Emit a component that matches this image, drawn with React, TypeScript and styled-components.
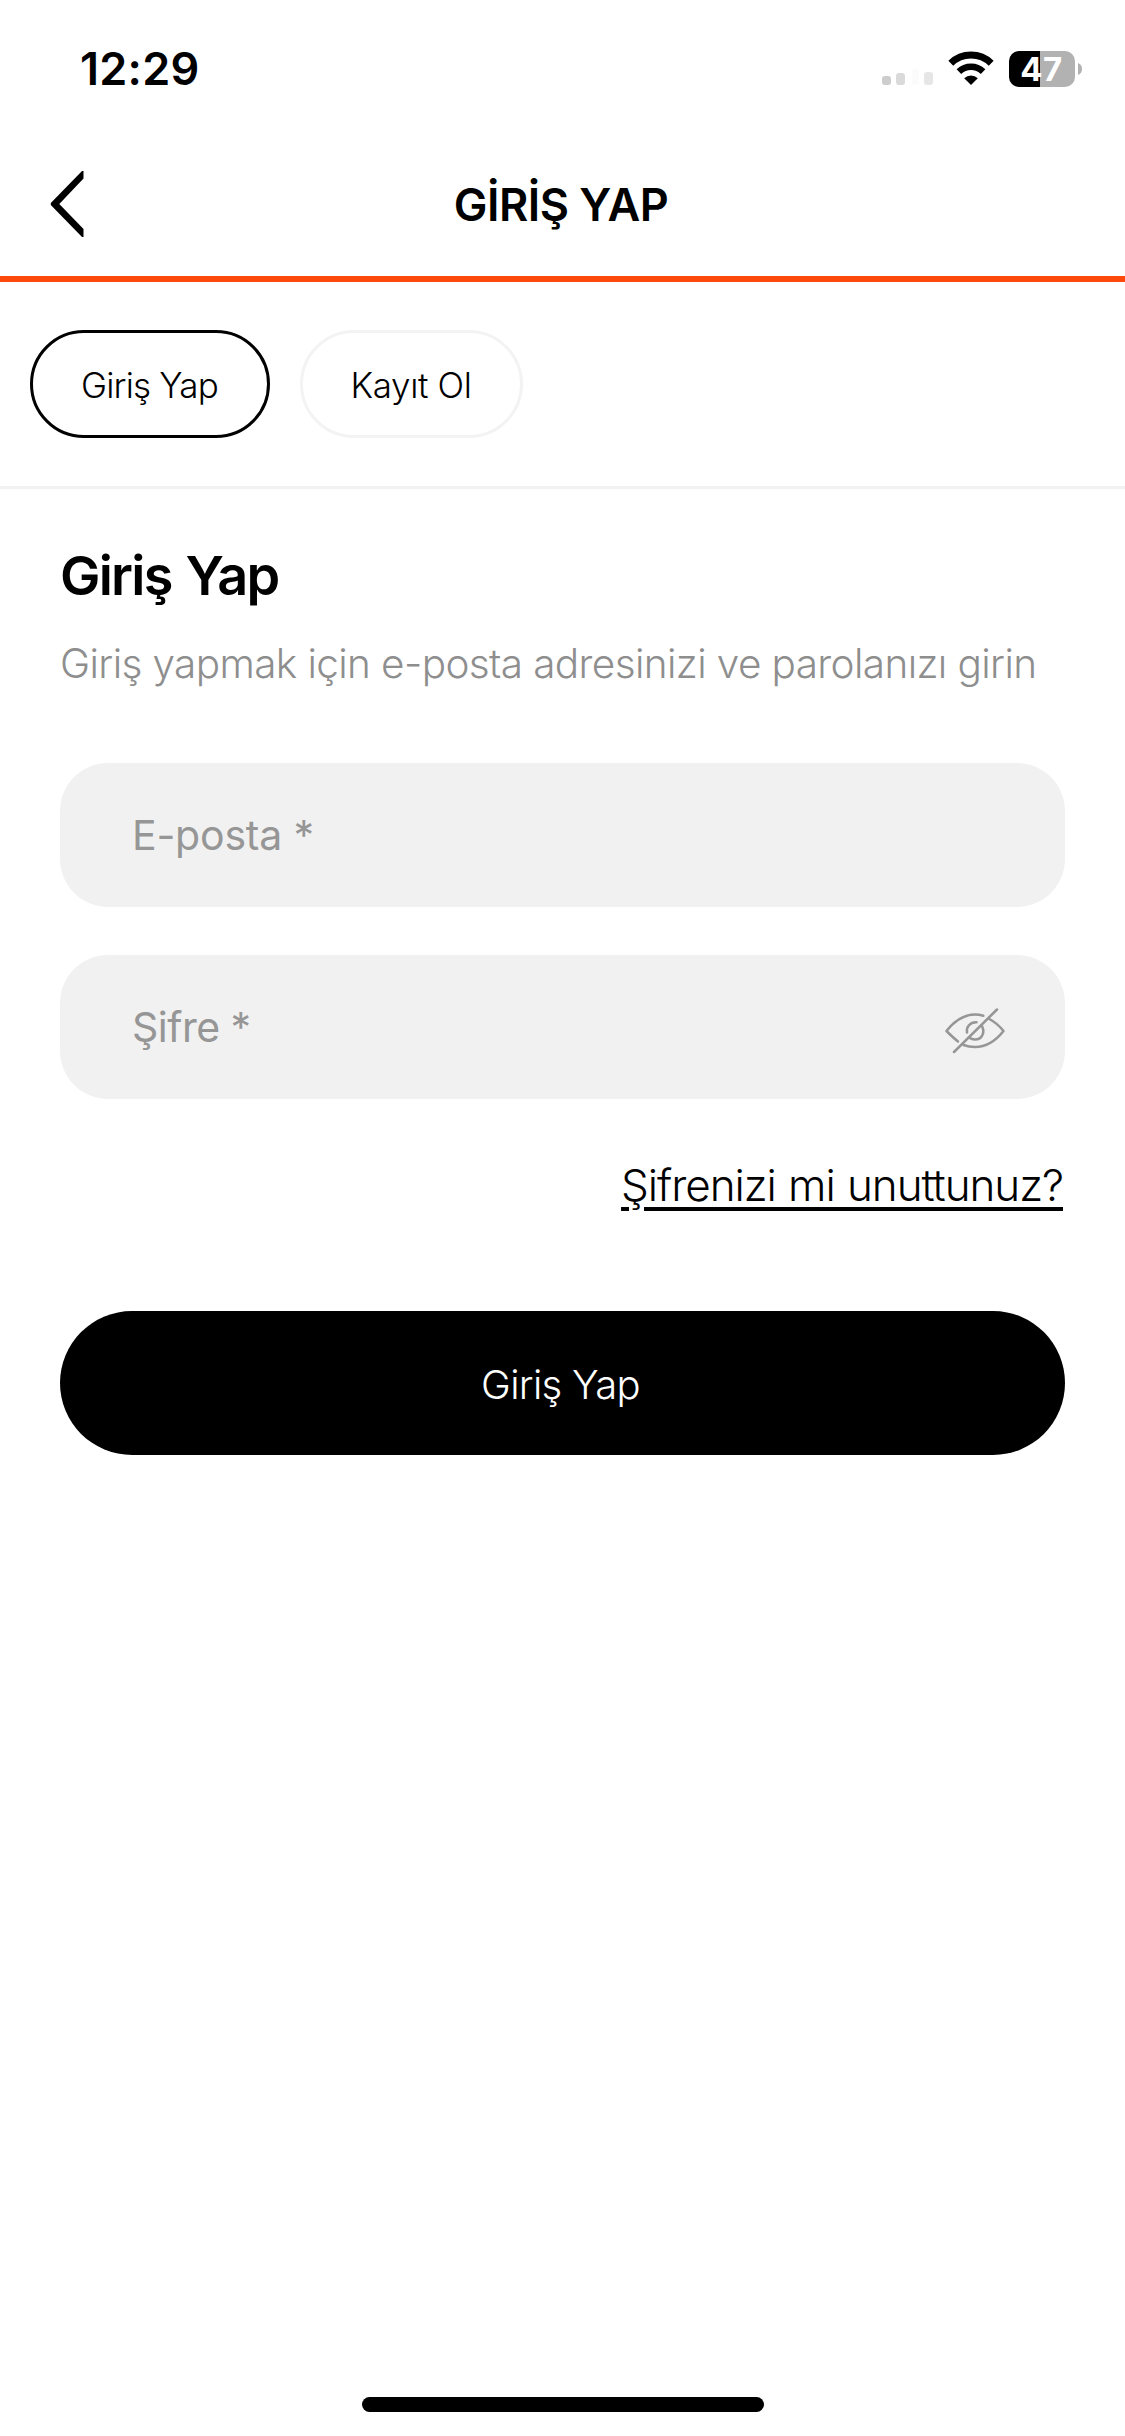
import React from "react";
import styled, { createGlobalStyle } from "styled-components";

const GlobalStyle = createGlobalStyle`
  *, *::before, *::after { box-sizing: border-box; }
  body { margin: 0; background: #fff; color: #000; font-family: Inter, "Noto Sans", sans-serif; }
  button { font-family: inherit; color: inherit; margin: 0; padding: 0; border: 0; background: none; }
`;

const Screen = styled.div`
  width: 1125px;
  height: 2436px;
  display: flex;
  flex-direction: column;
  background: #fff;
  overflow: hidden;
`;

const StatusBar = styled.div`
  height: 132px;
  padding: 6px 43px 0 80px;
  display: flex;
  align-items: center;
  justify-content: space-between;
`;

const Clock = styled.span`
  font-size: 45px;
  font-weight: 600;
  line-height: 54px;
  letter-spacing: 0.26px;
`;

const StatusIcons = styled.div`
  display: flex;
  align-items: center;
`;

const Signal = styled.svg`
  width: 52px;
  height: 36px;
  margin-right: 14px;
`;

const Wifi = styled.svg`
  width: 46px;
  height: 36px;
  margin-right: 15px;
`;

const Battery = styled.div`
  width: 66px;
  height: 36px;
  border-radius: 10px;
  background: linear-gradient(to right, #000 31px, #b2b2b2 31px);
  display: flex;
  align-items: center;
  justify-content: center;
  color: #fff;
  font-size: 33px;
  font-weight: 700;
  line-height: 36px;
  letter-spacing: 0.6px;
  padding-right: 1px;
`;

const BatteryCap = styled.svg`
  width: 4px;
  height: 12px;
  margin-left: 3px;
`;

const Header = styled.header`
  height: 150px;
  border-bottom: 6px solid #fb4a0c;
  padding: 0 50px;
  display: grid;
  grid-template-columns: 100px 1fr 100px;
  align-items: center;
`;

const BackButton = styled.button`
  height: 68px;
  display: flex;
`;

const Title = styled.h1`
  margin: 0;
  text-align: center;
  font-size: 45px;
  font-weight: 600;
  line-height: 56px;
  letter-spacing: -0.5px;
  padding: 1px 3px 0 0;
`;

const Tabs = styled.nav`
  display: flex;
  gap: 30px;
  padding: 48px 30px;
  border-bottom: 3px solid #f1f1f1;
`;

const Tab = styled.button<{ $active?: boolean; $width: number; $tracking: number }>`
  && {
    width: ${(p) => p.$width}px;
    height: 108px;
    border: 3px solid ${(p) => (p.$active ? "#000" : "#f3f3f3")};
    border-radius: 54px;
    padding: 2px 1px 0 0;
    font-size: 35px;
    font-weight: 300;
    letter-spacing: ${(p) => p.$tracking}px;
  }
`;

const Content = styled.main`
  flex: 1;
  padding: 51px 60px 0;
  display: flex;
  flex-direction: column;
`;

const Heading = styled.h2`
  margin: 0;
  font-size: 54px;
  font-weight: 600;
  line-height: 72px;
  letter-spacing: -1.75px;
  word-spacing: 2px;
`;

const Subtitle = styled.p`
  margin: 24px 0 0;
  font-size: 40.5px;
  font-weight: 300;
  line-height: 56px;
  letter-spacing: -0.62px;
  white-space: nowrap;
  color: #8e8e8e;
`;

const Fields = styled.div`
  margin-top: 71px;
  display: flex;
  flex-direction: column;
  gap: 48px;
`;

const Field = styled.label`
  height: 144px;
  border-radius: 48px;
  background: #f1f1f1;
  padding: 0 60px 0 72px;
  display: flex;
  align-items: center;
  justify-content: space-between;
`;

const FieldLabel = styled.span<{ $tracking: number }>`
  font-size: 41px;
  font-weight: 400;
  line-height: 50px;
  letter-spacing: ${(p) => p.$tracking}px;
  color: #969696;
`;

const EyeIcon = styled.svg`
  width: 60px;
  height: 46px;
  margin-top: 7px;
`;

const ForgotLink = styled.a`
  align-self: flex-end;
  margin: 56px 2px 0 0;
  font-size: 44px;
  font-weight: 300;
  line-height: 60px;
  letter-spacing: -1.05px;
  word-spacing: 1px;
  text-decoration: underline;
  text-decoration-thickness: 4px;
  text-underline-offset: 6px;
`;

const SubmitButton = styled.button`
  && {
    margin-top: 96px;
    height: 144px;
    border-radius: 72px;
    background: #000;
    color: #fff;
    padding: 2px 4px 0 0;
    font-size: 40px;
    font-weight: 300;
    letter-spacing: -0.68px;
  }
`;

const HomeIndicator = styled.div`
  align-self: center;
  width: 402px;
  height: 15px;
  margin-bottom: 24px;
  border-radius: 8px;
  background: #000;
`;

export default function App() {
  return (
    <Screen>
      <GlobalStyle />
      <StatusBar>
        <Clock>12:29</Clock>
        <StatusIcons>
          <Signal viewBox="0 0 52 36">
            <rect x="0" y="25" width="9" height="9" rx="3" fill="#cdcdcd" />
            <rect x="14" y="22" width="9" height="12" rx="3" fill="#dadada" />
            <rect x="30" y="18" width="7" height="16" rx="3" fill="#fbfbfb" />
            <rect x="42" y="21" width="9" height="13" rx="3" fill="#e6e6e6" />
          </Signal>
          <Wifi viewBox="0 0 46 36" fill="none">
            <path d="M2.8 12.2 A29 29 0 0 1 43.2 12.2" stroke="#000" strokeWidth="7" />
            <path d="M10.9 20.6 A17.6 17.6 0 0 1 35.1 20.6" stroke="#000" strokeWidth="6.6" />
            <path d="M16.2 27.2 A10 10 0 0 1 29.8 27.2 L23 34 Z" fill="#000" />
          </Wifi>
          <Battery>47</Battery>
          <BatteryCap viewBox="0 0 4 12">
            <path d="M0 0 A6.5 6.5 0 0 1 0 12 Z" fill="#b2b2b2" />
          </BatteryCap>
        </StatusIcons>
      </StatusBar>

      <Header>
        <BackButton aria-label="Geri">
          <svg width="34" height="68" viewBox="0 0 34 68">
            <path d="M33.5 1 V8.6 L9.3 34 L33.5 59 V67 H32 L0.8 35 V33 L32 1 Z" fill="#000" />
          </svg>
        </BackButton>
        <Title>GİRİŞ YAP</Title>
      </Header>

      <Tabs>
        <Tab $active $width={240} $tracking={-0.8}>Giriş Yap</Tab>
        <Tab $width={223} $tracking={-0.35}>Kayıt Ol</Tab>
      </Tabs>

      <Content>
        <Heading>Giriş Yap</Heading>
        <Subtitle>Giriş yapmak için e-posta adresinizi ve parolanızı girin</Subtitle>
        <Fields>
          <Field>
            <FieldLabel $tracking={-0.2}>E-posta *</FieldLabel>
          </Field>
          <Field>
            <FieldLabel $tracking={-0.5}>Şifre *</FieldLabel>
            <EyeIcon viewBox="0 0 60 46" fill="none" stroke="#969696" strokeWidth="2.5" strokeLinecap="round" strokeLinejoin="round">
              <path d="M13 33.5 C8.5 30 4.5 26 1.5 23 C9 13.5 18.5 6.5 30 6.5 C33 6.5 35.8 7 38.3 7.8" />
              <path d="M43.5 10.5 C50 14 55 18.5 58.5 23 C51 32.5 41.5 39 30 39 C25.5 39 22 38.3 18.5 37" />
              <path d="M22 24.5 C21 19 25 14 31.5 14.3" />
              <path d="M36.5 17.5 C40.5 23.5 37.5 31.5 30 31.5 C27.8 31.5 26 31 24.5 29.8" />
              <path d="M9 44 L52 1.5" />
            </EyeIcon>
          </Field>
        </Fields>
        <ForgotLink>Şifrenizi mi unuttunuz?</ForgotLink>
        <SubmitButton>Giriş Yap</SubmitButton>
      </Content>

      <HomeIndicator />
    </Screen>
  );
}
